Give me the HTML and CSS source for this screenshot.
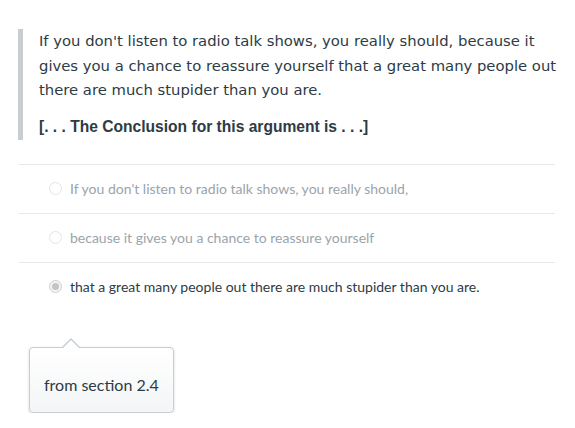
FILE: index.html
```html
<!DOCTYPE html>
<html>
<head>
<meta charset="utf-8">
<link rel="stylesheet" href="styles.css">
</head>
<body>
<div class="page">
  <blockquote class="quote">
    <p class="quote-text">If you don't listen to radio talk shows, you really should, because it gives you a chance to reassure yourself that a great many people out there are much stupider than you are.</p>
    <p class="quote-prompt">[. . . The Conclusion for this argument is . . .]</p>
  </blockquote>
  <div class="options">
    <div class="option disabled"><span class="radio"></span><span class="label">If you don't listen to radio talk shows, you really should,</span></div>
    <div class="option disabled"><span class="radio"></span><span class="label">because it gives you a chance to reassure yourself</span></div>
    <div class="option selected"><span class="radio checked"></span><span class="label">that a great many people out there are much stupider than you are.</span></div>
  </div>
  <div class="popover">from section 2.4</div>
</div>
</body>
</html>
```
FILE: styles.css
```css
html, body {
  margin: 0;
  padding: 0;
  background: #ffffff;
}
.page {
  padding: 29px 20px 0 18px;
}
.quote {
  margin: 0;
  border-left: 5px solid #c7cdd1;
  padding: 0 0 3px 16px;
}
.quote-text {
  margin: 0 -4px 0 0;
  font-family: "DejaVu Sans", sans-serif;
  font-size: 14.8px;
  line-height: 24.5px;
  color: #2d3b45;
}
.quote-prompt {
  margin: 14px 0 0 0;
  font-family: "Liberation Sans", Arial, sans-serif;
  font-weight: bold;
  font-size: 15.6px;
  line-height: 20px;
  color: #2d3b45;
}
.options {
  margin: 24px 0 0 1px;
}
.option {
  display: flex;
  align-items: center;
  height: 48px;
  border-top: 1px solid #e6e8ea;
  padding-left: 30px;
  font-family: Lato, sans-serif;
  font-size: 14px;
}
.option.disabled .label {
  color: #9aa4ab;
}
.option.selected .label {
  color: #2d3b45;
}
.radio {
  box-sizing: border-box;
  width: 13px;
  height: 13px;
  border-radius: 50%;
  border: 1px solid #e2e5e7;
  background: #fff;
  margin-right: 8px;
  flex: none;
  position: relative;
}
.radio.checked {
  border-color: #cfcfcf;
  background: #f4f4f4;
}
.radio.checked::after {
  content: "";
  position: absolute;
  left: 2px;
  top: 2px;
  width: 7px;
  height: 7px;
  border-radius: 50%;
  background: #c4c4c4;
}
.popover {
  position: relative;
  box-sizing: border-box;
  width: 145px;
  height: 66px;
  margin: 36px 0 0 11px;
  border: 1px solid #c7cdd1;
  border-radius: 4px;
  background: linear-gradient(#ffffff, #f3f5f6);
  box-shadow: 0 1px 3px rgba(0,0,0,0.15);
  font-family: Lato, sans-serif;
  font-size: 16px;
  color: #2d3b45;
  display: flex;
  align-items: center;
  padding-left: 14px;
  padding-top: 10px;
}
.popover::before {
  content: "";
  position: absolute;
  left: 31px;
  top: -10px;
  width: 0;
  height: 0;
  border-left: 10px solid transparent;
  border-right: 10px solid transparent;
  border-bottom: 10px solid #c7cdd1;
}
.popover::after {
  content: "";
  position: absolute;
  left: 32px;
  top: -8px;
  width: 0;
  height: 0;
  border-left: 9px solid transparent;
  border-right: 9px solid transparent;
  border-bottom: 9px solid #ffffff;
}
```
